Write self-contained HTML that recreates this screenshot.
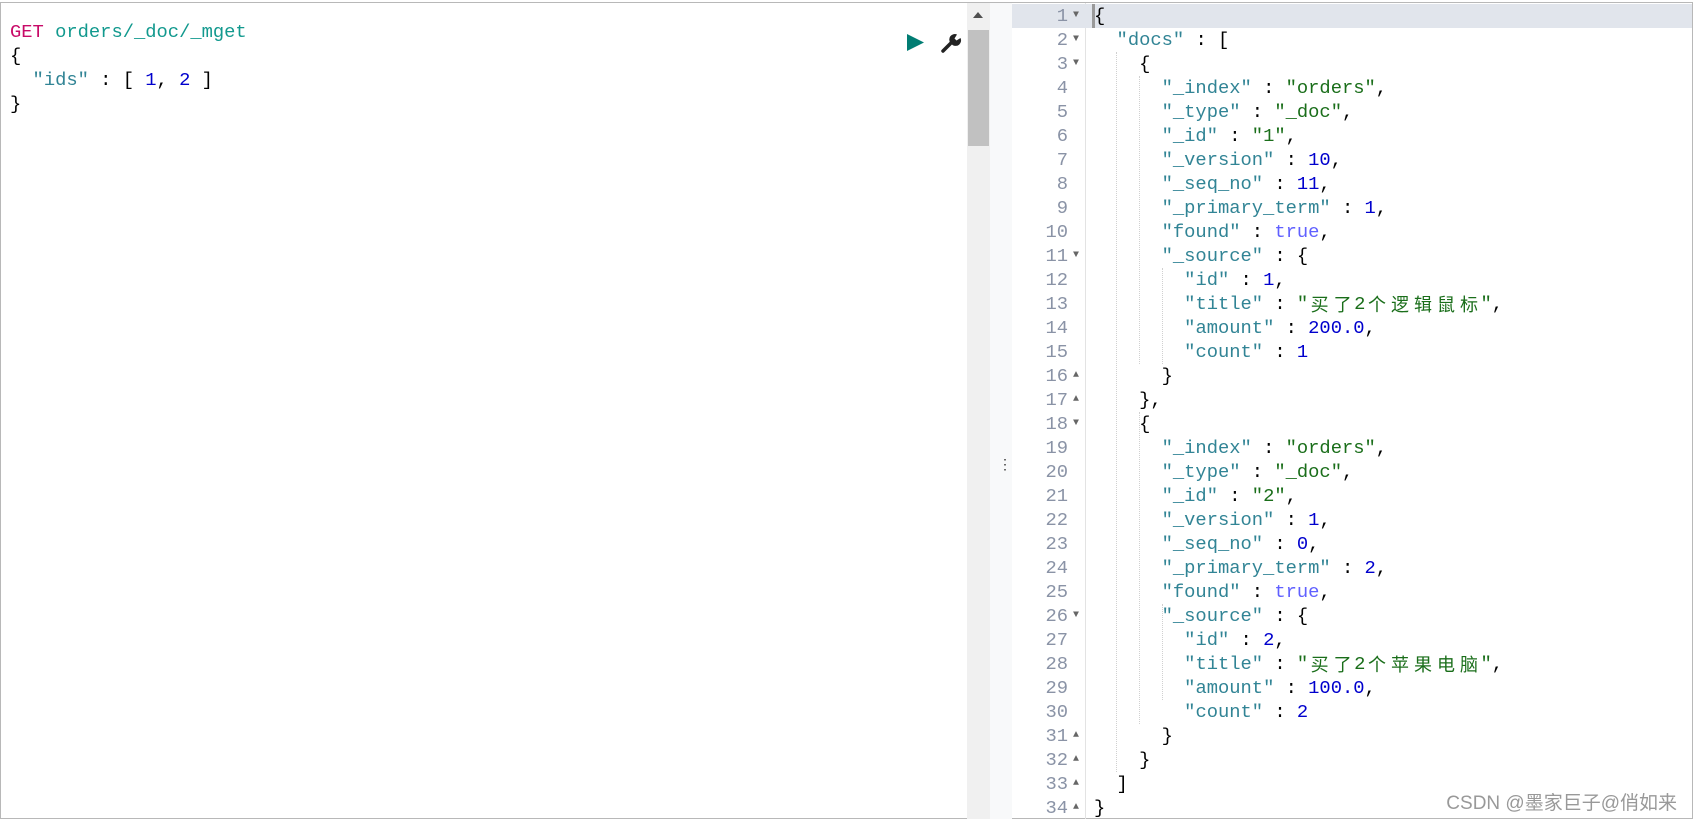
<!DOCTYPE html>
<html><head><meta charset="utf-8"><style>
*{margin:0;padding:0;box-sizing:border-box}
body{width:1693px;height:820px;background:#fff;position:relative;overflow:hidden;font-family:"Liberation Mono","Noto Sans CJK SC",monospace;font-size:18.8px}
.frame{position:absolute;left:0;top:2px;width:1693px;height:817px;border:1px solid #b8b8b8}
.l{position:absolute;height:24px;line-height:24px;white-space:pre}
.k{color:#318495}.s{color:#1a6e1a}.n{color:#0000cd}.b{color:#6060ff}.p{color:#000}
.c{display:inline-block;width:23px;height:24px;line-height:24px;vertical-align:top;text-align:center;font-family:"Noto Sans CJK SC",sans-serif;font-size:18px}
.g{position:absolute;left:1012px;width:56px;text-align:right;color:#8a93a6;height:24px;line-height:24px}
.ar{position:absolute;left:1073px;font-size:10px;color:#666;height:24px;line-height:24px}
.guide{position:absolute;border-left:1px dotted #d0d0d0}
</style></head><body>
<div class="frame"></div>
<div class="l" style="left:10px;top:20px"><span style="color:#c80a68">GET</span> <span style="color:#12998e">orders/_doc/_mget</span></div>
<div class="l" style="left:10px;top:44px">{</div>
<div class="l" style="left:10px;top:68px">  <span class="k">"ids"</span> : [ <span class="n">1</span>, <span class="n">2</span> ]</div>
<div class="l" style="left:10px;top:92px">}</div>
<svg style="position:absolute;left:906px;top:33px" width="19" height="19"><polygon points="1,1 18,9.5 1,18" fill="#017d73"/></svg>
<svg style="position:absolute;left:940px;top:32px" width="22" height="22" viewBox="0 0 22 22"><path d="M3 19 L12 10" stroke="#222" stroke-width="3.5" stroke-linecap="round"/><path d="M10.5 11 A5.5 5.5 0 0 1 17 2.5 L14.5 6.5 L16.5 8.5 L20.5 6 A5.5 5.5 0 0 1 12.5 13 Z" fill="#222"/></svg>
<div style="position:absolute;left:967px;top:3px;width:23px;height:816px;background:#f0f0f0"></div>
<div style="position:absolute;left:968px;top:30px;width:21px;height:116px;background:#c1c1c1"></div>
<svg style="position:absolute;left:972px;top:11px" width="12" height="8"><polygon points="6,1 11,7 1,7" fill="#505050"/></svg>
<div style="position:absolute;left:990px;top:3px;width:22px;height:816px;background:#f8f9fa"></div>
<div style="position:absolute;left:998px;top:456px;font-size:14px;color:#333;font-family:'Liberation Sans',sans-serif">⋮</div>
<div style="position:absolute;left:1085px;top:3px;width:1px;height:816px;background:#e3e3e3"></div>
<div style="position:absolute;left:1012px;top:4px;width:680px;height:24px;background:#e1e5ec"></div>
<div style="position:absolute;left:1092px;top:4px;width:3px;height:24px;background:#999"></div>
<div id="r"></div>
<div style="position:absolute;right:16px;top:788px;font-family:'Liberation Sans','Noto Sans CJK SC',sans-serif;font-size:19px;color:#999">CSDN @墨家巨子@俏如来</div>
<script>
function cj(s){return s.replace(/[\u4e00-\u9fff]/g,function(c){return '<span class="c">'+c+'</span>';});}
var L=[
'{',
'  <span class="k">"docs"</span> : [',
'    {',
'      <span class="k">"_index"</span> : <span class="s">"orders"</span>,',
'      <span class="k">"_type"</span> : <span class="s">"_doc"</span>,',
'      <span class="k">"_id"</span> : <span class="s">"1"</span>,',
'      <span class="k">"_version"</span> : <span class="n">10</span>,',
'      <span class="k">"_seq_no"</span> : <span class="n">11</span>,',
'      <span class="k">"_primary_term"</span> : <span class="n">1</span>,',
'      <span class="k">"found"</span> : <span class="b">true</span>,',
'      <span class="k">"_source"</span> : {',
'        <span class="k">"id"</span> : <span class="n">1</span>,',
'        <span class="k">"title"</span> : <span class="s">"'+cj('买了')+'2'+cj('个逻辑鼠标')+'"</span>,',
'        <span class="k">"amount"</span> : <span class="n">200.0</span>,',
'        <span class="k">"count"</span> : <span class="n">1</span>',
'      }',
'    },',
'    {',
'      <span class="k">"_index"</span> : <span class="s">"orders"</span>,',
'      <span class="k">"_type"</span> : <span class="s">"_doc"</span>,',
'      <span class="k">"_id"</span> : <span class="s">"2"</span>,',
'      <span class="k">"_version"</span> : <span class="n">1</span>,',
'      <span class="k">"_seq_no"</span> : <span class="n">0</span>,',
'      <span class="k">"_primary_term"</span> : <span class="n">2</span>,',
'      <span class="k">"found"</span> : <span class="b">true</span>,',
'      <span class="k">"_source"</span> : {',
'        <span class="k">"id"</span> : <span class="n">2</span>,',
'        <span class="k">"title"</span> : <span class="s">"'+cj('买了')+'2'+cj('个苹果电脑')+'"</span>,',
'        <span class="k">"amount"</span> : <span class="n">100.0</span>,',
'        <span class="k">"count"</span> : <span class="n">2</span>',
'      }',
'    }',
'  ]',
'}'];
var down=[1,2,3,11,18,26],up=[16,17,31,32,33,34],h='';
for(var i=0;i<L.length;i++){var y=4+i*24,n=i+1;
h+='<div class="g" style="top:'+y+'px">'+n+'</div>';
if(down.indexOf(n)>=0)h+='<div class="ar" style="top:'+y+'px">▼</div>';
if(up.indexOf(n)>=0)h+='<div class="ar" style="top:'+y+'px">▲</div>';
h+='<div class="l" style="left:1094px;top:'+y+'px">'+L[i]+'</div>';}
h+='<div class="guide" style="left:1116px;top:52px;height:720px"></div>';
h+='<div class="guide" style="left:1139px;top:76px;height:288px"></div>';
h+='<div class="guide" style="left:1139px;top:412px;height:312px"></div>';
h+='<div class="guide" style="left:1162px;top:268px;height:96px"></div>';
h+='<div class="guide" style="left:1162px;top:604px;height:96px"></div>';
document.getElementById('r').innerHTML=h;
</script>
</body></html>
